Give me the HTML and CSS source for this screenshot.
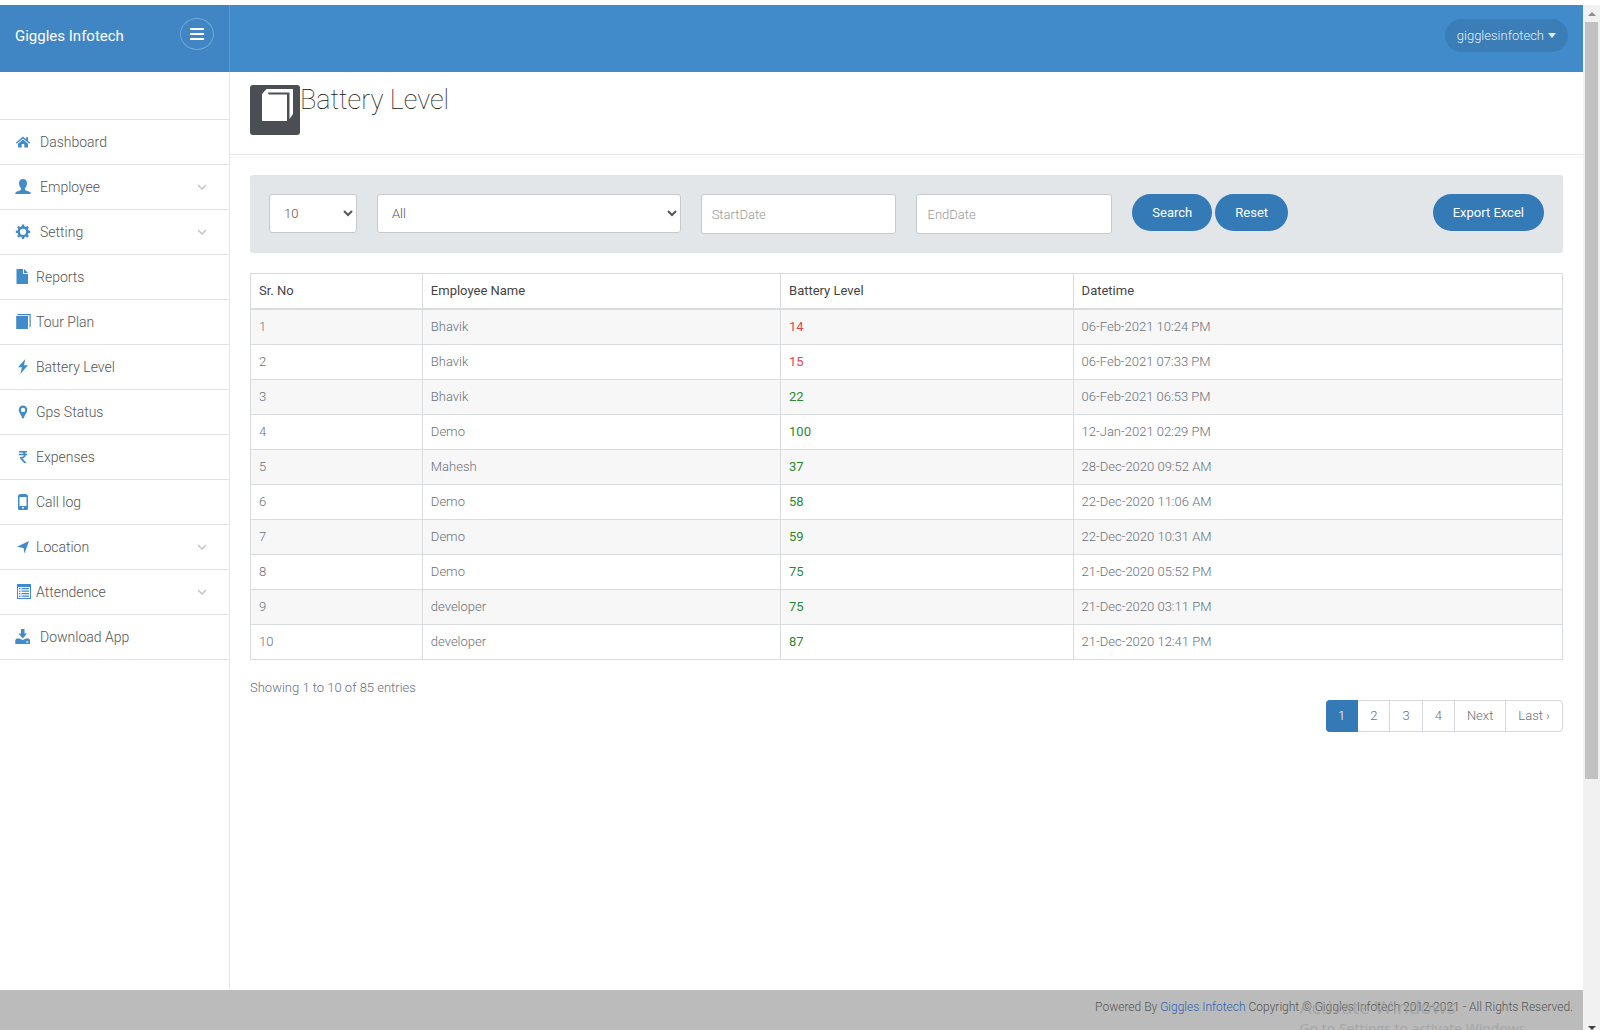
FILE: index.html
```html
<!DOCTYPE html>
<html lang="en">
<head>
<meta charset="utf-8">
<title>Battery Level</title>
<link rel="stylesheet" href="styles.css">
</head>
<body>
<div class="page">
  <header class="topbar">
    <div class="brand">
      <a class="brand-name" href="#">Giggles Infotech</a>
      <button class="menu-toggle" type="button" aria-label="Toggle menu">
        <svg width="14" height="12" viewBox="0 0 14 12"><path d="M0 0h14v2H0zM0 5h14v2H0zM0 10h14v2H0z" fill="currentColor"/></svg>
      </button>
    </div>
    <button class="account" type="button">gigglesinfotech
      <svg width="8" height="5" viewBox="0 0 8 5"><path d="M0 0h8L4 5z" fill="currentColor"/></svg>
    </button>
  </header>
  <div class="body">
    <nav class="sidebar">
      <ul class="menu">
        <li><a class="item wide" href="#"><svg class="icon" viewBox="0 0 16 16"><path d="M8 2.600L.8 8.800l.9 1L8 4.500l6.300 5.300.9-1L13 6.900V3.200h-2v2zM8 5.500L3 9.700V13.600h3.700V10h2.600v3.600H13V9.700z"/></svg><span>Dashboard</span></a></li>
        <li><a class="item wide" href="#"><svg class="icon" viewBox="0 0 16 16"><path d="M8 0C5.600 0 4 1.500 4 4.200c0 2.300 1 4 2 5v1c0 .6-.5.9-1.200 1.200L1.500 12.800C.5 13.300.3 14 .3 15h15.400c0-1-.2-1.700-1.200-2.200l-3.300-1.400C10.500 11.100 10 10.800 10 10.200v-1c1-1 2-2.700 2-5C12 1.500 10.400 0 8 0z"/></svg><span>Employee</span><svg class="chevron" viewBox="0 0 10 6"><path d="M1 1l4 4 4-4"/></svg></a></li>
        <li><a class="item wide" href="#"><svg class="icon" viewBox="0 0 16 16"><path fill-rule="evenodd" d="M6.900.6h2.200l.4 2 1.100.5 1.700-1.200 1.600 1.600-1.200 1.700.5 1.100 2 .4v2.200l-2 .4-.5 1.100 1.200 1.700-1.600 1.600-1.700-1.200-1.100.5-.4 2H6.900l-.4-2-1.100-.5-1.700 1.200-1.600-1.600 1.200-1.700-.5-1.100-2-.4V6.700l2-.4.5-1.100-1.200-1.700 1.600-1.600 1.700 1.200 1.100-.5zM8 4.700a3.100 3.100 0 1 0 0 6.200 3.100 3.100 0 0 0 0-6.200z"/></svg><span>Setting</span><svg class="chevron" viewBox="0 0 10 6"><path d="M1 1l4 4 4-4"/></svg></a></li>
        <li><a class="item" href="#"><svg class="icon" viewBox="0 0 16 16"><path d="M1.500 0H8v5h5v10H1.500zM9 0l4 4H9z"/></svg><span>Reports</span></a></li>
        <li><a class="item" href="#"><svg class="icon" viewBox="0 0 16 16"><path d="M1.200 2h11.800v13H1.200zM3 0h12.700v12.500L14.500 14V1.200H2z"/></svg><span>Tour Plan</span></a></li>
        <li><a class="item" href="#"><svg class="icon" viewBox="0 0 16 16"><path d="M10.300 0L3 8.300h4L5.300 15 13 6.300H9z"/></svg><span>Battery Level</span></a></li>
        <li><a class="item" href="#"><svg class="icon" viewBox="0 0 16 16"><path fill-rule="evenodd" d="M8 1.500a4.300 4.300 0 0 0-4.300 4.300C3.700 8.500 6 10.500 7.200 14q.8 1 1.600 0C10 10.500 12.300 8.500 12.300 5.800A4.300 4.300 0 0 0 8 1.500zm0 2.200a2.200 2.200 0 1 1 0 4.400 2.200 2.200 0 0 1 0-4.400z"/></svg><span>Gps Status</span></a></li>
        <li><a class="item" href="#"><svg class="icon" viewBox="0 0 16 16"><path d="M4 2h8v1.500h-2l.6 1.200H12v1.500h-1.300C10.400 8 9.200 9 7.400 9.200L11.500 14H9L5 9.300V7.900h1.500c1.300 0 2-.6 2.300-1.700H4V4.700h4.600C8.200 3.900 7.500 3.500 6.300 3.500H4z"/></svg><span>Expenses</span></a></li>
        <li><a class="item" href="#"><svg class="icon" viewBox="0 0 16 16"><path fill-rule="evenodd" d="M5 0h6l2 1.500v13L12.500 16h-9L3 14.500v-13zM4.500 3v9h7V3zM7 13v1.500h2V13z"/></svg><span>Call log</span></a></li>
        <li><a class="item" href="#"><svg class="icon" viewBox="0 0 16 16"><path d="M14 2L9.500 14.500 8.500 9 2 7.800z"/></svg><span>Location</span><svg class="chevron" viewBox="0 0 10 6"><path d="M1 1l4 4 4-4"/></svg></a></li>
        <li><a class="item" href="#"><svg class="icon" viewBox="0 0 16 16"><path fill-rule="evenodd" d="M2 0h14v15H2zM3 3v11h12V3zM4 4h1.500v1.200H4zm2.500 0H14v1.200H6.500zM4 6.500h1.500v1.200H4zm2.500 0H14v1.200H6.500zM4 9h1.500v1.200H4zm2.500 0H14v1.200H6.500zM4 11.500h1.500v1.200H4zm2.500 0H14v1.200H6.500z"/></svg><span>Attendence</span><svg class="chevron" viewBox="0 0 10 6"><path d="M1 1l4 4 4-4"/></svg></a></li>
        <li><a class="item wide" href="#"><svg class="icon" viewBox="0 0 16 16"><path fill-rule="evenodd" d="M6 0h3.500v4.500H12L7.700 9.500 3.500 4.500H6zM1.500 9.500H4.500l3.200 1.500 3.300-1.500h2.800L15 11v4H.3v-4zM11 12.500v1h2.500v-1z"/></svg><span>Download App</span></a></li>
      </ul>
    </nav>
    <main class="content">
      <div class="heading">
        <svg class="heading-icon" viewBox="0 0 50 50"><rect width="50" height="50" rx="3" fill="#4b4f53"/><path d="M16.500 4H43v25l-3.500 5V7.500H17.500L19 9.500h18V36H12V9z" fill="#fff"/></svg>
        <h1>Battery Level</h1>
      </div>
      <div class="inner">
        <form class="filters">
          <select class="field span1" aria-label="Page size"><option>10</option></select>
          <select class="field span3" aria-label="Employee"><option>All</option></select>
          <input class="field span2" type="text" placeholder="StartDate" aria-label="Start date">
          <input class="field span2" type="text" placeholder="EndDate" aria-label="End date">
          <div class="actions span4">
            <button class="btn" type="button">Search</button>
            <button class="btn" type="button">Reset</button>
            <button class="btn export" type="button">Export Excel</button>
          </div>
        </form>
        <table class="data">
          <colgroup><col class="c-no"><col class="c-name"><col class="c-level"><col class="c-date"></colgroup>
          <thead><tr><th>Sr. No</th><th>Employee Name</th><th>Battery Level</th><th>Datetime</th></tr></thead>
          <tbody>
            <tr><td>1</td><td>Bhavik</td><td class="low">14</td><td>06-Feb-2021 10:24 PM</td></tr>
            <tr><td>2</td><td>Bhavik</td><td class="low">15</td><td>06-Feb-2021 07:33 PM</td></tr>
            <tr><td>3</td><td>Bhavik</td><td class="ok">22</td><td>06-Feb-2021 06:53 PM</td></tr>
            <tr><td>4</td><td>Demo</td><td class="ok">100</td><td>12-Jan-2021 02:29 PM</td></tr>
            <tr><td>5</td><td>Mahesh</td><td class="ok">37</td><td>28-Dec-2020 09:52 AM</td></tr>
            <tr><td>6</td><td>Demo</td><td class="ok">58</td><td>22-Dec-2020 11:06 AM</td></tr>
            <tr><td>7</td><td>Demo</td><td class="ok">59</td><td>22-Dec-2020 10:31 AM</td></tr>
            <tr><td>8</td><td>Demo</td><td class="ok">75</td><td>21-Dec-2020 05:52 PM</td></tr>
            <tr><td>9</td><td>developer</td><td class="ok">75</td><td>21-Dec-2020 03:11 PM</td></tr>
            <tr><td>10</td><td>developer</td><td class="ok">87</td><td>21-Dec-2020 12:41 PM</td></tr>
          </tbody>
        </table>
        <p class="summary">Showing 1 to 10 of 85 entries</p>
        <nav class="pagination" aria-label="Pages">
          <a class="current" href="#">1</a><a href="#">2</a><a href="#">3</a><a href="#">4</a><a href="#">Next</a><a href="#">Last ›</a>
        </nav>
      </div>
    </main>
  </div>
  <footer class="footer">
    <p>Powered By <a href="#">Giggles Infotech</a> Copyright © Giggles Infotech 2012-2021 - All Rights Reserved.</p>
    <div class="notice"><div class="notice-title">Activate Windows</div><div>Go to Settings to activate Windows.</div></div>
  </footer>
</div>
<div class="scrollbar" aria-hidden="true">
  <svg class="up" width="8" height="4" viewBox="0 0 8 4"><path d="M4 0l4 4H0z" fill="#8b8b8b"/></svg>
  <div class="thumb"></div>
  <svg class="down" width="8" height="4" viewBox="0 0 8 4"><path d="M0 0h8L4 4z" fill="#404040"/></svg>
</div>
</body>
</html>
```
FILE: styles.css
```css
* { box-sizing: border-box; }

body {
  margin: 0;
  display: flex;
  height: 100vh;
  padding-top: 5px;
  background: #fff;
  color: #6a707b;
  font: 300 13px/18px Roboto, "Liberation Sans", sans-serif;
}

button, input, select { font: inherit; }
a { color: inherit; text-decoration: none; }
svg { display: block; flex: none; }

.page { flex: 1; min-width: 0; display: flex; flex-direction: column; }

.topbar {
  display: flex;
  justify-content: space-between;
  align-items: flex-start;
  height: 67px;
  background: #428bca;
  color: #fff;
}
.brand {
  display: flex;
  justify-content: space-between;
  align-items: flex-start;
  width: 230px;
  height: 100%;
  padding: 13px 15px;
  background: #4186c4;
  border-right: 1px solid #5c9bd1;
}
.brand-name { font-size: 15px; line-height: 36px; font-weight: 400; }
.menu-toggle {
  display: grid;
  place-items: center;
  width: 34px;
  height: 32px;
  padding: 0;
  border: 1px solid #6ea9da;
  border-radius: 50%;
  background: none;
  color: #fff;
}
.account {
  display: flex;
  align-items: center;
  gap: 4px;
  height: 33px;
  margin: 14px 15px 0 0;
  padding: 0 12px;
  border: 0;
  border-radius: 17px;
  background: #3b7db6;
  color: #e3f0fb;
}

.body { flex: 1; min-height: 0; display: flex; }
.sidebar { width: 230px; flex: none; border-right: 1px solid #e4e7e9; }
.menu { list-style: none; margin: 47px 0 0; padding: 0; border-top: 1px solid #e2e2e2; }
.item {
  display: flex;
  align-items: center;
  gap: 5px;
  height: 45px;
  padding: 0 22px 0 15px;
  border-bottom: 1px solid #e2e2e2;
  color: #555;
  font-size: 14px;
}
.wide { gap: 9px; }
.icon { width: 16px; height: 16px; fill: #428bca; }
.chevron { width: 10px; height: 6px; margin-left: auto; fill: none; stroke: #c4c4c4; stroke-width: 1.500; }

.content { flex: 1; min-width: 0; }
.heading {
  display: flex;
  height: 86px;
  padding: 13px 20px 0;
  border-bottom: 1px solid #f6f6f6;
  box-shadow: inset 0 -2px #fff, inset 0 -3px #e8e8e8;
}
.heading-icon { width: 50px; height: 50px; }
h1 { margin: 0; font-size: 27px; line-height: 30px; font-weight: 100; color: #111; }

.inner { padding: 17px 20px 0; }
.filters {
  display: grid;
  grid-template-columns: repeat(12, 1fr);
  gap: 20px;
  padding: 19px;
  margin-bottom: 20px;
  background: #e2e6e9;
  border-radius: 3px;
}
.span1 { grid-column: span 1; }
.span2 { grid-column: span 2; }
.span3 { grid-column: span 3; }
.span4 { grid-column: span 4; }
.field {
  width: 100%;
  min-width: 0;
  height: 40px;
  padding: 6px 10px;
  border: 1px solid #c6cacd;
  border-radius: 3px;
  background: #fff;
  color: #555;
}
select.field { height: 39px; padding-right: 0; }
.field::placeholder { color: #999; opacity: 1; }
.actions { display: flex; gap: 3px; align-items: flex-start; }
.btn {
  height: 37px;
  padding: 0 20px;
  border: 0;
  border-radius: 19px;
  background: #337ab7;
  color: #fff;
  font-weight: 400;
}
.export { margin-left: auto; }

.data { width: 100%; table-layout: fixed; border-collapse: collapse; }
.c-no { width: 13.1%; }
.c-name { width: 27.3%; }
.c-level { width: 22.3%; }
.data th, .data td { height: 35px; padding: 8px; border: 1px solid #d9dcde; text-align: left; }
.data th { border-bottom-width: 2px; color: #444; font-weight: 400; }
.data tbody tr:nth-child(odd) { background: #f7f7f7; }
.data .low { color: #e8434b; font-weight: 400; }
.data .ok { color: #2b8a30; font-weight: 400; }

.summary { margin: 19px 0 0; }
.pagination { display: flex; justify-content: flex-end; margin-top: 3px; }
.pagination a { padding: 6px 12px; border: 1px solid #d5d9dd; border-left-width: 0; }
.pagination .current { background: #337ab7; border-color: #337ab7; color: #fff; border-radius: 4px 0 0 4px; }
.pagination a:last-child { border-radius: 0 4px 4px 0; }

.footer {
  position: relative;
  height: 40px;
  overflow: hidden;
  padding: 8px 10px;
  background: #bbb;
  color: #555;
  font-size: 12px;
  text-align: right;
}
.footer p { margin: 0; }
.footer p a { color: #2f62b5; }
.notice {
  position: absolute;
  top: 5px;
  right: 54px;
  color: #a0a0a0;
  font: 14px/20px "Open Sans", "Noto Sans", sans-serif;
  text-align: left;
  white-space: nowrap;
  opacity: .8;
}
.notice-title { font-size: 19px; line-height: 24px; }

.scrollbar {
  width: 17px;
  flex: none;
  display: flex;
  flex-direction: column;
  align-items: center;
  padding-top: 7px;
  background: #f1f1f1;
}
.thumb { width: 13px; height: calc(74% + 4px); margin-top: 6px; background: #c1c1c1; }
.down { margin-top: auto; }
```
